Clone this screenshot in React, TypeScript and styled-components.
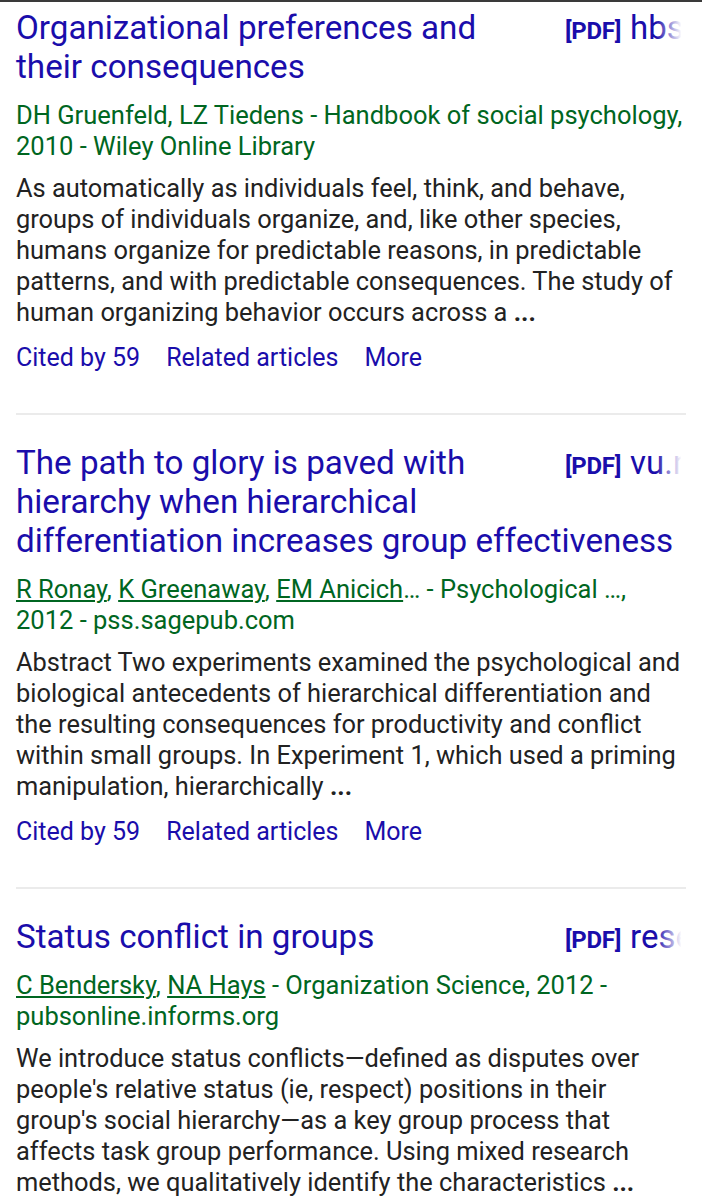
import React from 'react';
import styled, { createGlobalStyle } from 'styled-components';

const GlobalStyle = createGlobalStyle`
  html, body {
    margin: 0;
    padding: 0;
    background: #ffffff;
  }
  body {
    font-family: Roboto, "Noto Sans", "Liberation Sans", sans-serif;
    -webkit-font-smoothing: antialiased;
  }
`;

const Page = styled.div`
  border-top: 2px solid #3a3a3a;
  padding: 0 16px;
`;

const Result = styled.div<{ $first?: boolean; $last?: boolean }>`
  padding-top: ${(p) => (p.$first ? '6px' : '28px')};
  padding-bottom: ${(p) => (p.$last ? '0' : '40px')};
  border-bottom: ${(p) => (p.$last ? 'none' : '2px solid #ebebeb')};
`;

const Title = styled.h3`
  margin: 0;
  font-size: 33.2px;
  line-height: 39px;
  font-weight: 400;
  color: #1a0dab;
`;

const TitleLink = styled.a`
  color: inherit;
  text-decoration: none;
`;

/* the pdf badge floats on the right of the title and is cut off with a fade */
const PdfLink = styled.a`
  float: right;
  position: relative;
  width: 121px;
  height: 44px;
  margin-left: 20px;
  overflow: hidden;
  white-space: nowrap;
  color: #1a0dab;
  text-decoration: none;

  &::after {
    content: '';
    position: absolute;
    top: 0;
    right: 0;
    width: 30px;
    height: 39px;
    background: linear-gradient(to right, rgba(255, 255, 255, 0), #ffffff 85%);
  }
`;

const PdfTag = styled.span`
  font-size: 24px;
  font-weight: 700;
  letter-spacing: -0.3px;
  margin-right: 9px;
`;

const Host = styled.span`
  font-size: 33px;
`;

const Meta = styled.div`
  margin-top: 14px;
  font-size: 25.5px;
  line-height: 31px;
  color: #006621;
`;

const Author = styled.a`
  color: #006621;
  text-decoration: underline;
  text-underline-offset: 2px;
  text-decoration-thickness: 1.5px;
`;

const Snippet = styled.div`
  margin-top: 11px;
  font-size: 25.4px;
  line-height: 31px;
  color: #222222;
`;

const Links = styled.div`
  margin-top: 14px;
  display: flex;
  gap: 26px;
  font-size: 25px;
  line-height: 31px;
`;

const ActionLink = styled.a`
  color: #1a0dab;
  text-decoration: none;
`;

type Item = {
  title: string;
  host: string;
  meta: React.ReactNode;
  snippet: string;
  cited: number;
};

const items: Item[] = [
  {
    title: 'Organizational preferences and their consequences',
    host: 'hbs.edu',
    meta: <>DH Gruenfeld, LZ Tiedens - Handbook of social psychology, 2010 - Wiley Online Library</>,
    snippet:
      'As automatically as individuals feel, think, and behave, groups of individuals organize, and, like other species, humans organize for predictable reasons, in predictable patterns, and with predictable consequences. The study of human organizing behavior occurs across a',
    cited: 59,
  },
  {
    title: 'The path to glory is paved with hierarchy when hierarchical differentiation increases group effectiveness',
    host: 'vu.nl',
    meta: (
      <>
        <Author href="#">R Ronay</Author>, <Author href="#">K Greenaway</Author>,{' '}
        <Author href="#">EM Anicich</Author>… - Psychological …, 2012 - pss.sagepub.com
      </>
    ),
    snippet:
      'Abstract Two experiments examined the psychological and biological antecedents of hierarchical differentiation and the resulting consequences for productivity and conflict within small groups. In Experiment 1, which used a priming manipulation, hierarchically',
    cited: 59,
  },
  {
    title: 'Status conflict in groups',
    host: 'researchgate.net',
    meta: (
      <>
        <Author href="#">C Bendersky</Author>, <Author href="#">NA Hays</Author> - Organization Science, 2012 -
        pubsonline.informs.org
      </>
    ),
    snippet:
      "We introduce status conflicts\u2014defined as disputes over people's relative status (ie, respect) positions in their group's social hierarchy\u2014as a key group process that affects task group performance. Using mixed research methods, we qualitatively identify the characteristics",
    cited: 0,
  },
];

export default function App() {
  return (
    <>
      <GlobalStyle />
      <Page>
        {items.map((item, i) => (
          <Result key={i} $first={i === 0} $last={i === items.length - 1}>
            <Title>
              <PdfLink href="#">
                <PdfTag>[PDF]</PdfTag>
                <Host>{item.host}</Host>
              </PdfLink>
              <TitleLink href="#">{item.title}</TitleLink>
            </Title>
            <Meta>{item.meta}</Meta>
            <Snippet>
              {item.snippet} <b>...</b>
            </Snippet>
            {item.cited > 0 && (
              <Links>
                <ActionLink href="#">Cited by {item.cited}</ActionLink>
                <ActionLink href="#">Related articles</ActionLink>
                <ActionLink href="#">More</ActionLink>
              </Links>
            )}
          </Result>
        ))}
      </Page>
    </>
  );
}
